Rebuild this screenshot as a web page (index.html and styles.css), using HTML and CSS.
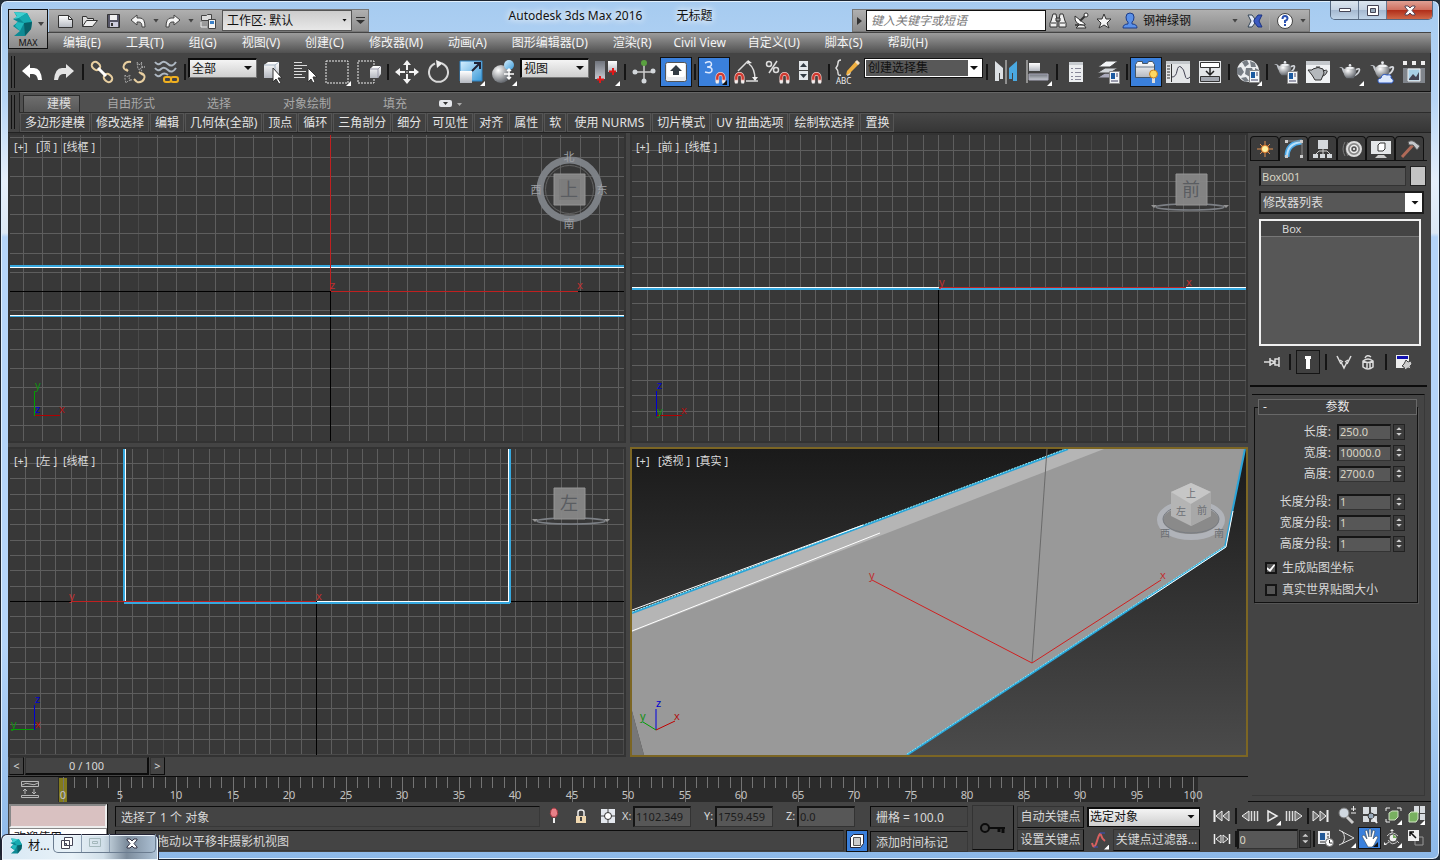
FILE: index.html
```html
<!DOCTYPE html>
<html lang="zh-CN">
<head>
    <meta charset="UTF-8">
    <meta name="viewport" content="width=device-width, initial-scale=1.0">
    <title>Autodesk 3ds Max 2016</title>
    <link rel="stylesheet" href="styles.css">
</head>
<body>

<!-- Shared shapes -->
<svg class="defs" width="0" height="0" aria-hidden="true">
    <defs>
        <linearGradient id="gWhite" x1="0" y1="0" x2="0" y2="1"><stop offset="0" stop-color="#fff"/><stop offset="1" stop-color="#b4b8c0"/></linearGradient>
        <linearGradient id="gGrey" x1="0" y1="0" x2="0" y2="1"><stop offset="0" stop-color="#70747c"/><stop offset="1" stop-color="#c4c8d0"/></linearGradient>
        <linearGradient id="gBlue" x1="0" y1="0" x2="1" y2="1"><stop offset="0" stop-color="#d8f0ff"/><stop offset="1" stop-color="#3a9ad8"/></linearGradient>
        <linearGradient id="gSky" x1="0" y1="0" x2="0" y2="1"><stop offset="0" stop-color="#1a1a1a"/><stop offset="1" stop-color="#4b4b4b"/></linearGradient>
        <radialGradient id="gBall" cx="35%" cy="30%" r="70%"><stop offset="0" stop-color="#fff"/><stop offset="1" stop-color="#666a70"/></radialGradient>
        <symbol id="magnet" viewBox="0 0 12 13"><path d="M2.500 12V6a3.500 3.500 0 0 1 7 0v6" fill="none" stroke="#f4d0cc" stroke-width="4"/><path d="M2.500 9V6a3.500 3.500 0 0 1 7 0v3" fill="none" stroke="#d03a30" stroke-width="2.600"/><path d="M1 10h3v3H1zM8 10h3v3H8z" fill="#eee"/></symbol>
        <symbol id="badge" viewBox="0 0 11 13"><path d="M.5.500h10v12H.5z" fill="#f4f6f8" stroke="#888"/><path d="M2 2h4v6H2z" fill="#1c5aa0"/><path d="M7 3h2M7 5h2M2 10h7" stroke="#446"/></symbol>
        <symbol id="teapot" viewBox="0 0 26 20"><path d="M20 8q5-3 4 1t-6 6" fill="none" stroke="#d4d7dc" stroke-width="2"/><path d="M7 13Q4 11 3 6L0 5q5-1 6 3z" fill="#c4c8ce"/><path d="M6 7q7-4 14 0 1 7-3 11H9Q4 14 6 7z" fill="url(#gBall)"/><path d="M7 6q6-4 12 0-6 2-12 0z" fill="#f0f2f4"/><circle cx="13" cy="2.500" r="1.500" fill="#e8eaee"/></symbol>
        <symbol id="logo" viewBox="0 0 22 26"><path d="M2 1l13 1 5 9-1 7-6 7-11 0 6-5-3-2-4-3 5-4-5-3 4-2z" fill="#0d8a94"/><path d="M2 1l13 1-8 5-5 1 3-3z" fill="#3cd0d0"/><path d="M15 2l5 9-8 1-5-5z" fill="#16aab0"/><path d="M12 12l8-1-1 7-6 7z" fill="#086068"/><path d="M5 11l7 1-4 8-5-5z" fill="#22b8bc"/></symbol>
    </defs>
</svg>

<div class="window">

    <!-- Title bar and menu -->
    <header class="header">
        <button class="app-button" aria-label="应用程序菜单">
            <svg width="22" height="26"><use href="#logo"/></svg>
            <span>MAX</span>
            <i class="caret"></i>
        </button>
        <div class="titlebar">
            <div class="quick">
                <button aria-label="新建"><svg width="18" height="16" viewBox="0 0 18 16"><path d="M1.500 2.500h10l4 4v8h-14z" fill="url(#gWhite)" stroke="#333"/><path d="M11.500 2.500v4h4" fill="none" stroke="#333"/></svg></button>
                <button aria-label="打开"><svg width="18" height="16" viewBox="0 0 18 16"><path d="M1.500 13.500v-10h4l1 2h6v3" fill="#ddd" stroke="#333"/><path d="M1.500 13.500l4-6h11l-5 6z" fill="#eee" stroke="#333"/></svg></button>
                <button aria-label="保存"><svg width="16" height="16" viewBox="0 0 16 16"><path d="M1.500 1.500h12v13h-12z" fill="#556" stroke="#333"/><path d="M4 2h7v5H4z" fill="#f0f0f0"/><path d="M4 9h8v5H4z" fill="#ccd"/><path d="M5 10h2v3H5z" fill="#333"/></svg></button>
                <button aria-label="撤消"><svg width="18" height="16" viewBox="0 0 18 16"><path d="M2 7l6-5v3h3q5 0 5 9h-3q0-5-3-5H8v3z" fill="#f4f4f4" stroke="#444"/></svg></button><i class="caret"></i>
                <button aria-label="重做"><svg width="18" height="16" viewBox="0 0 18 16"><path d="M16 7l-6-5v3H7q-5 0-5 9h3q0-5 3-5h2v3z" fill="#f4f4f4" stroke="#444"/></svg></button><i class="caret"></i>
                <button aria-label="项目文件夹"><svg width="18" height="16" viewBox="0 0 18 16"><path d="M2.500 2.500h5l1-1h4v6h-10z" fill="#ddd" stroke="#444"/><path d="M2 9v5h6" fill="none" stroke="#eee"/><path d="M9.500 6.500h7v9h-7z" fill="#f4f4f4" stroke="#444"/><path d="M11 8h4v3h-4z" fill="#3a80c8"/></svg></button>
                <span class="select ws-select"><select aria-label="工作区"><option>工作区: 默认</option></select></span>
                <button class="more" aria-label="自定义"><svg width="11" height="9" viewBox="0 0 11 9"><path d="M1 1.500h9" stroke="#333"/><path d="M1 4h9L5.500 8z" fill="#333"/></svg></button>
            </div>
            <h1><span>Autodesk 3ds Max 2016</span><span>无标题</span></h1>
            <div class="infocenter">
                <button class="expand" aria-label="折叠"><svg width="6" height="10" viewBox="0 0 6 10"><path d="M0 1l5 4-5 4z" fill="#333"/></svg></button>
                <input type="search" aria-label="搜索" placeholder="键入关键字或短语">
                <button aria-label="搜索"><svg width="18" height="18" viewBox="0 0 18 18"><path d="M2 9l2-7h3l1 6v7H1v-4zM16 9l-2-7h-3l-1 6v7h7v-4z" fill="#f0f0f0" stroke="#333"/><path d="M7 6h4v3H7zM2 11h5M11 11h5" stroke="#333" fill="#999"/></svg></button>
                <button aria-label="订阅"><svg width="16" height="18" viewBox="0 0 16 18"><path d="M2 13h9l2 3H3l3-3z" fill="#eee" stroke="#333"/><path d="M2 4q-1 9 9 9 2 0 1-1z" fill="#fff" stroke="#333"/><path d="M7 9l6-6" stroke="#333" stroke-width="2"/><circle cx="13" cy="3" r="2" fill="#fff" stroke="#333"/></svg></button>
                <button aria-label="收藏"><svg width="18" height="18" viewBox="0 0 18 18"><path d="M9 2l2 5h5l-4 4 2 5-5-3-5 3 2-5-4-4h5z" fill="#f4f4f4" stroke="#333"/></svg></button>
                <button class="user"><svg width="16" height="18" viewBox="0 0 16 18"><path d="M1 16q0-4 5-4V10Q4 9 4 5q0-4 4-4t4 4q0 4-2 5v2q5 0 5 4z" fill="#5a90e8" stroke="#1c3c88"/></svg><span>钢神绿钢</span><i class="caret"></i></button>
                <button aria-label="Exchange"><svg width="16" height="16" viewBox="0 0 16 16"><path d="M1 2h4l3 4v4l-3 4H1l3-6z" fill="#e4eaf8" stroke="#345"/><path d="M15 2h-4L7 7l0 2 4 5h4l-3-6z" fill="#3a58c0" stroke="#1c3480"/></svg></button>
                <i class="rule"></i>
                <button aria-label="帮助"><svg width="18" height="18" viewBox="0 0 18 18"><circle cx="9" cy="9" r="7.500" fill="#fff" stroke="#444"/><path d="M6.500 7q0-3 2.500-3t2.500 2.500Q11.500 8 9 9v2" fill="none" stroke="#2a50b0" stroke-width="2"/><path d="M8 12h2v2H8z" fill="#2a50b0"/></svg></button><i class="caret"></i>
            </div>
            <div class="win-buttons">
                <button aria-label="最小化"><svg width="12" height="6" viewBox="0 0 12 6"><path d="M.5 1.500h11v3H.5z" fill="#fff" stroke="#445"/></svg></button>
                <button aria-label="最大化"><svg width="12" height="11" viewBox="0 0 12 11"><path d="M.5.500h11v10H.5z" fill="#fff" stroke="#445"/><path d="M3.500 3.500h5v4h-5z" fill="#9ab" stroke="#445"/></svg></button>
                <button class="close" aria-label="关闭"><svg width="12" height="11" viewBox="0 0 12 11"><path d="M1 1h3l2 2 2-2h3v1L8 5.500 11 9v1H8L6 8l-2 2H1V9l3-3.500L1 2z" fill="#fff" stroke="#545"/></svg></button>
            </div>
        </div>
        <nav class="menubar">
            <a href="#">编辑(E)</a>
            <a href="#">工具(T)</a>
            <a href="#">组(G)</a>
            <a href="#">视图(V)</a>
            <a href="#">创建(C)</a>
            <a href="#">修改器(M)</a>
            <a href="#">动画(A)</a>
            <a href="#">图形编辑器(D)</a>
            <a href="#">渲染(R)</a>
            <a href="#" class="tight">Civil View</a>
            <a href="#">自定义(U)</a>
            <a href="#">脚本(S)</a>
            <a href="#">帮助(H)</a>
        </nav>
    </header>

    <!-- Main toolbar -->
    <div class="toolbar">
        <button aria-label="撤消"><svg viewBox="0 0 26 26"><path d="M3 12l8-7v4h4q7 0 8 12h-4q-1-6-5-6h-3v4z" fill="#fff"/></svg></button>
        <button aria-label="重做"><svg viewBox="0 0 26 26"><path d="M23 12l-8-7v4h-4Q4 9 3 21h4q1-6 5-6h3v4z" fill="#e4e4e4"/></svg></button>
        <i class="sep"></i>
        <button aria-label="选择并链接"><svg viewBox="0 0 26 26"><g fill="none" stroke="#e8cfa0" stroke-width="2"><rect x="2.500" y="3.500" width="9" height="7" rx="3.500" transform="rotate(42 7 7)"/><rect x="14.500" y="15.500" width="9" height="7" rx="3.500" transform="rotate(42 19 19)"/><path d="M9 9l8 8" stroke="#fff" stroke-width="3"/></g></svg></button>
        <button aria-label="取消链接"><svg viewBox="0 0 26 26"><g fill="none" stroke="#e8cfa0" stroke-width="2"><path d="M10 3Q5 2 3 6t4 6M16 23q5 1 7-3t-3-6M5 10l2 2M18 13l4 3M13 20l3 3"/></g><path d="M16 3l2 3 3-3-1 4 4 1-5 1 2 3-4-2zM4 16l2 2 3-2-1 4 3 1-4 1-2 2-1-4z" fill="none" stroke="#a8a8a8" stroke-dasharray="2 1"/></svg></button>
        <button aria-label="绑定到空间扭曲"><svg viewBox="0 0 26 26"><g fill="none" stroke="#aeb8c2" stroke-width="2"><path d="M2 3q3 4 6 1t7 1 8-2M2 9q3 4 6 1t7 1 8-2M2 15q3 4 6 1t7 0"/></g><g fill="none" stroke="#f0b020" stroke-width="2"><rect x="11" y="18" width="7" height="5" rx="2"/><rect x="18" y="18" width="7" height="5" rx="2"/></g></svg></button>
        <i class="sep"></i>
        <span class="select filter"><select aria-label="选择过滤器"><option>全部</option></select></span>
        <button aria-label="选择对象"><svg viewBox="0 0 26 26"><path d="M4 6l4-3h11v12l-4 4H4z" fill="url(#gWhite)"/><path d="M4 6h11v13M15 6l4-3" stroke="#a4b4c4" fill="none"/><path d="M13 9v14l3-3 3 5 2-1-3-5h4z" fill="#fff" stroke="#333"/></svg></button>
        <button aria-label="按名称选择"><svg viewBox="0 0 26 26"><path d="M2 3.500h8M2 6.500h13M2 9.500h8M2 12.500h12M2 15.500h8M2 18.500h11" stroke="#ddd"/><path d="M16 9v14l3-3 2 4 2-1-2-5h4z" fill="#fff" stroke="#333"/></svg></button>
        <button class="fly" aria-label="矩形选择区域"><svg viewBox="0 0 26 26"><path d="M2 2h22v22H2z" fill="none" stroke="#eee" stroke-dasharray="2 1"/></svg></button>
        <button aria-label="窗口/交叉"><svg viewBox="0 0 26 26"><path d="M18 6V2H2v22h16v-4" fill="none" stroke="#eee" stroke-dasharray="2 1"/><path d="M14 10l3-3h8v8l-3 4h-8z" fill="url(#gWhite)"/><path d="M14 10h8v9M22 10l3-3" fill="none" stroke="#99a"/></svg></button>
        <i class="sep"></i>
        <button aria-label="选择并移动"><svg viewBox="0 0 26 26"><path d="M13 1l4 5h-3v5h-2V6H9zM13 25l4-5h-3v-5h-2v5H9zM1 13l5-4v3h5v2H6v3zM25 13l-5-4v3h-5v2h5v3z" fill="#f4f4f4"/><path d="M12 12h2v2h-2z" fill="#888"/></svg></button>
        <button aria-label="选择并旋转"><svg viewBox="0 0 26 26"><path d="M16 4.500a9.500 9.500 0 1 1-7 0" fill="none" stroke="#d8d8d8" stroke-width="2"/><path d="M10 1l7 3-6 5z" fill="#eee"/></svg></button>
        <button class="fly" aria-label="选择并缩放"><svg viewBox="0 0 26 26"><path d="M2 2h22v20H2z" fill="url(#gBlue)" stroke="#2c80c0"/><path d="M2 12h12v12H2z" fill="url(#gWhite)"/><path d="M14 12l7-7M16 4h6v6" stroke="#223" stroke-width="2" fill="none"/></svg></button>
        <button class="fly" aria-label="选择并放置"><svg viewBox="0 0 26 26"><circle cx="11" cy="15" r="9" fill="url(#gBall)"/><circle cx="19" cy="6" r="5" fill="url(#gBlue)"/><path d="M19 10v10M14 15h10M17 12l2-2 2 2M17 18l2 2 2-2" stroke="#fff" stroke-width="1.500" fill="none"/></svg></button>
        <span class="select refsys"><select aria-label="参考坐标系"><option>视图</option></select></span>
        <button class="fly" aria-label="使用轴点中心"><svg viewBox="0 0 26 26"><path d="M2 2h10v18H2z" fill="url(#gGrey)"/><path d="M15 2h9v11h-9z" fill="url(#gWhite)"/><path d="M7 17v7M4 20.500h7M20 9v7M16 12.500h7" stroke="#e01818" stroke-width="2"/></svg></button>
        <i class="sep"></i>
        <button aria-label="选择并操纵"><svg viewBox="0 0 26 26"><path d="M13 5v17M3 13h20" stroke="#ccc" stroke-width="1.500"/><circle cx="13" cy="4" r="3" fill="#5aa040"/><g fill="#d4d8dc"><circle cx="4" cy="13" r="2.500"/><circle cx="22" cy="12" r="2.500"/><circle cx="13" cy="22" r="2.500"/></g></svg></button>
        <button class="on" aria-label="键盘快捷键覆盖切换"><svg viewBox="0 0 26 26"><rect x="2.500" y="3.500" width="21" height="19" rx="2" fill="#e8eaee" stroke="#555"/><rect x="4" y="4" width="18" height="14" rx="2" fill="#fff"/><path d="M13 6l6 6h-3v4h-6v-4H7z" fill="#333c44"/></svg></button>
        <i class="sep"></i>
        <button class="on fly" aria-label="捕捉开关"><svg viewBox="0 0 26 26"><path d="M4 4q6-3 6.500 1 0 3-4.500 3 5 0 5 3 0 4-7 2" fill="none" stroke="#dce8ff" stroke-width="1.500"/><use href="#magnet" x="14" y="12" width="11" height="13"/></svg></button>
        <button aria-label="角度捕捉"><svg viewBox="0 0 26 26"><path d="M5 12L15 2M13 22h12M16 5q6 4 6 16" fill="none" stroke="#ddd" stroke-width="1.500"/><path d="M14 5l1-4 4 3zM19 18l3 4 3-4z" fill="#eee"/><use href="#magnet" x="1" y="12" width="11" height="13"/></svg></button>
        <button aria-label="百分比捕捉"><svg viewBox="0 0 26 26"><g fill="none" stroke="#ddd" stroke-width="1.500"><circle cx="4" cy="5" r="2.500"/><circle cx="11" cy="11" r="2.500"/><path d="M12 2L4 14"/></g><use href="#magnet" x="14" y="12" width="11" height="13"/></svg></button>
        <button aria-label="微调器捕捉"><svg viewBox="0 0 26 26"><path d="M2 2h9v9H2zM2 12h9v9H2z" fill="#e4e8ec"/><path d="M3 8l3.500-4L10 8zM3 15l3.500 4 3.500-4z" fill="#333c44"/><use href="#magnet" x="14" y="12" width="11" height="13"/></svg></button>
        <i class="sep"></i>
        <button aria-label="编辑命名选择集"><svg viewBox="0 0 26 26"><g fill="none" stroke="#ddd" stroke-width="1.500"><path d="M6 1Q3 1 3 4t-2 5q2 2 2 5t3 2M12 16q3 0 3-3"/></g><path d="M12 12L21 2l3 3-10 10-3 1z" fill="#f0b040"/><path d="M20 3l2-2 3 3-2 2z" fill="#f0e0c8"/><text x="1" y="25" class="abc">ABC</text></svg></button>
        <span class="select named"><select aria-label="命名选择集"><option>创建选择集</option></select></span>
        <i class="sep"></i>
        <button aria-label="镜像"><svg viewBox="0 0 26 26"><path d="M2 2l8 7v11H7v-6H6v8H2z" fill="#dce0e4"/><path d="M24 2l-8 7v11h3v-6h1v8h4z" fill="#4aa8e0"/><path d="M13 1v24" stroke="#ddd"/></svg></button>
        <button class="fly" aria-label="对齐"><svg viewBox="0 0 26 26"><path d="M2 1v23" stroke="#ddd"/><path d="M4 4h11v8H4z" fill="url(#gWhite)"/><path d="M4 15h19v6H4z" fill="url(#gGrey)" stroke="#aab"/></svg></button>
        <i class="sep"></i>
        <button aria-label="场景资源管理器"><svg viewBox="0 0 26 26"><path d="M6 3h14v20H6z" fill="#eceef0"/><path d="M6 3h14v3H6z" fill="#c8ccd0"/><path d="M12 9.500h6M12 13.500h6M12 17.500h6M12 20.500h6M8 9.500h2M8 13.500h2M8 17.500h2M8 20.500h2" stroke="#889"/></svg></button>
        <button aria-label="层资源管理器"><svg viewBox="0 0 26 26"><g stroke="#444"><path d="M2 19l8-5h13l-8 5z" fill="#aab"/><path d="M2 14l8-5h13l-8 5z" fill="#d4d8dc"/><path d="M3 8l8-6h12l-8 6z" fill="#f4f6f8"/></g><use href="#badge" x="14" y="12" width="11" height="13"/></svg></button>
        <i class="sep"></i>
        <button class="on" aria-label="切换功能区"><svg viewBox="0 0 26 26"><path d="M2.500 5.500l2-3h5v2h5l1-2h4l2 3v13h-19z" fill="url(#gWhite)" stroke="#456"/><path d="M3 8h18" stroke="#678"/><path d="M19 18h3v6h-3z" fill="#ddd"/><circle cx="20.500" cy="15" r="4" fill="#ffd860" stroke="#c88020"/></svg></button>
        <button aria-label="曲线编辑器"><svg viewBox="0 0 26 26"><path d="M1 2h24v22H1z" fill="#e4e6e8"/><path d="M1 2h24v3H1z" fill="#c4c8cc"/><path d="M6.500 5v18M2 7h3M2 10h3M2 13h3M2 16h3M2 19h3" stroke="#333"/><path d="M7 18q4 0 5-6t4-4 4 8 5 2" fill="none" stroke="#445"/></svg></button>
        <button aria-label="图解视图"><svg viewBox="0 0 26 26"><path d="M2 2h22v22H2z" fill="#e4e6e8"/><path d="M3.500 3.500h19v5h-19z" fill="#fff" stroke="#333"/><path d="M3.500 17.500h19v5h-19z" fill="#a4a8b0" stroke="#333"/><path d="M13 9v7M9 12l4 4 4-4" stroke="#222" fill="none" stroke-width="1.500"/></svg></button>
        <i class="sep"></i>
        <button class="fly" aria-label="材质编辑器"><svg viewBox="0 0 26 26"><circle cx="13" cy="12" r="11" fill="#eceef0"/><path d="M7 3l5-2 2 4-4 3zM15 2l5 2 1 4-5 0zM2 9l4-1 3 5-3 4-4-2zM11 9l6 0 2 5-4 4-5-3zM20 9l4 2-1 5-3-2zM6 19l5-1 3 4-4 1z" fill="#777d84"/><use href="#badge" x="14" y="11" width="11" height="13"/></svg></button>
        <i class="sep"></i>
        <button aria-label="渲染设置"><svg viewBox="0 0 26 26"><use href="#teapot" x="1" y="1" width="22" height="17"/><use href="#badge" x="14" y="12" width="11" height="13"/></svg></button>
        <button aria-label="渲染帧窗口"><svg viewBox="0 0 26 26"><path d="M1 2h24v22H1z" fill="#f0f2f4"/><path d="M1 2h24v4H1z" fill="#c4c8cc"/><path d="M8 10q5-3 10 0l1 4-3 7h-6l-3-5-4-5h4zM18 12q5-2 4 1t-4 4M11 8h4" fill="#b4b8bc" stroke="#333"/></svg></button>
        <button class="fly" aria-label="渲染产品"><svg viewBox="0 0 26 26"><use href="#teapot" x="2" y="4" width="22" height="17"/></svg></button>
        <button aria-label="云渲染"><svg viewBox="0 0 26 26"><use href="#teapot" x="1" y="1" width="25" height="20"/><path d="M10 24q-3-4 2-5 1-5 6-3 5-1 4 3 4 2 1 5z" fill="#dce8fc" stroke="#2c58c0"/></svg></button>
        <button aria-label="打开库"><svg viewBox="0 0 26 26"><path d="M2 2h4v4H2zM11 2h4v4h-4zM20 2h4v4h-4z" fill="#eee"/><path d="M2 9h22v15H2z" fill="#80858c"/><path d="M7 10h12v12H7z" fill="#a8d0e8" stroke="#eee"/><path d="M8 20l4-5 3 3 3-5v8H8z" fill="#445"/></svg></button>
    </div>

    <!-- Ribbon -->
    <div class="ribbon">
        <div class="ribbon-tabs">
            <button class="active">建模</button>
            <button class="wide">自由形式</button>
            <button>选择</button>
            <button class="wide">对象绘制</button>
            <button>填充</button>
            <button class="ribbon-toggle" aria-label="最小化功能区"><svg width="24" height="10" viewBox="0 0 24 10"><rect x="1" y="1" width="13" height="7" rx="2" fill="#e4e6ea"/><path d="M5 3h5L7.500 6z" fill="#333"/><path d="M19 4h5l-2.500 3z" fill="#aaa"/></svg></button>
        </div>
        <div class="ribbon-panels">
            <button>多边形建模</button>
            <button>修改选择</button>
            <button>编辑</button>
            <button>几何体(全部)</button>
            <button>顶点</button>
            <button>循环</button>
            <button>三角剖分</button>
            <button>细分</button>
            <button>可见性</button>
            <button>对齐</button>
            <button>属性</button>
            <button>软</button>
            <button class="roomy">使用 NURMS</button>
            <button>切片模式</button>
            <button>UV 扭曲选项</button>
            <button>绘制软选择</button>
            <button>置换</button>
        </div>
    </div>

    <main class="workspace">
        <div class="stage">
            <div class="viewports">

                <!-- Top -->
                <section class="viewport">
                    <svg viewBox="0 0 614 306" preserveAspectRatio="xMidYMid slice">
                        <g class="grid" data-x="320" data-y="156" data-step="19.2"></g>
                        <g class="crisp">
                            <rect class="axis" y="156" width="614" height="1"/><rect class="axis" x="320" y="156" width="1" height="150"/>
                            <rect class="edge" y="130" width="614" height="2"/><rect class="edge-hi" y="132" width="614" height="1"/>
                            <rect class="edge-hi" y="180" width="614" height="1"/><rect class="edge" y="181" width="614" height="1"/>
                            <rect class="pivot" x="320" width="1" height="156"/><rect class="pivot" x="321" y="156" width="247" height="1"/>
                        </g>
                        <text class="pivot-label" x="320" y="154">z</text>
                        <text class="pivot-label" x="567" y="154">x</text>
                        <text class="vp-label" x="4" y="16">[+]</text><text class="vp-label" x="26" y="16">[顶 ]</text><text class="vp-label" x="53" y="16">[线框 ]</text>
                        <g class="crisp"><rect x="24" y="256" width="1" height="25" fill="#00a000"/><rect x="25" y="280" width="25" height="1" fill="#b00000"/></g>
                        <text class="tri-y" x="25" y="254">y</text><text class="tri-z" x="25" y="278">z</text><text class="tri-x" x="49" y="278">x</text>
                        <g class="cube">
                            <circle cx="559.500" cy="54.500" r="29.500" fill="none" stroke="#80848a" stroke-width="7"/>
                            <circle cx="559.500" cy="54.500" r="24" fill="none" stroke="#666" stroke-width="1"/>
                            <path d="M544 39h31v31h-31z" fill="#888" stroke="#999"/>
                            <path d="M549 44h21v21h-21z" fill="#808080"/>
                            <text x="559" y="61" class="cube-face">上</text>
                            <text x="559" y="26" class="compass">北</text><text x="559" y="93" class="compass">南</text><text x="526" y="59" class="compass">西</text><text x="592" y="59" class="compass">东</text>
                        </g>
                    </svg>
                </section>

                <!-- Front -->
                <section class="viewport">
                    <svg viewBox="0 0 614 306" preserveAspectRatio="xMidYMid slice">
                        <g class="grid" data-x="306" data-y="153" data-step="15.33"></g>
                        <g class="crisp">
                            <rect class="axis" x="306" y="153" width="1" height="153"/>
                            <rect class="edge-hi" y="152" width="614" height="1"/><rect class="edge" y="153" width="614" height="2"/>
                            <rect class="pivot" x="307" y="152" width="247" height="1"/>
                        </g>
                        <text class="pivot-label" x="307" y="151">y</text>
                        <text class="pivot-label" x="554" y="151">x</text>
                        <text class="vp-label" x="4" y="16">[+]</text><text class="vp-label" x="26" y="16">[前 ]</text><text class="vp-label" x="53" y="16">[线框 ]</text>
                        <g class="crisp"><rect x="25" y="280" width="25" height="1" fill="#b00000"/><rect x="24" y="256" width="1" height="25" fill="#0000d0"/></g>
                        <text class="tri-z" x="25" y="254">z</text><text class="tri-y" x="25" y="280">y</text><text class="tri-x" x="49" y="279">x</text>
                        <g class="cube">
                            <ellipse cx="558" cy="72" rx="34" ry="3" fill="none" stroke="#80848a" stroke-width="1.500"/>
                            <path d="M519 70h6l-3 3zM591 70h6l-3 3z" fill="#999"/>
                            <path d="M544 39h31v31h-31z" fill="#888" stroke="#999"/>
                            <text x="559" y="61" class="cube-face">前</text>
                        </g>
                    </svg>
                </section>

                <!-- Left -->
                <section class="viewport">
                    <svg viewBox="0 0 614 306" preserveAspectRatio="xMidYMid slice">
                        <g class="grid" data-x="306" data-y="152" data-step="15.33"></g>
                        <g class="crisp">
                            <rect class="axis" y="152" width="614" height="1"/><rect class="axis" x="306" y="152" width="1" height="154"/>
                            <rect class="edge" x="113" width="2" height="153"/><rect class="edge-hi" x="115" width="1" height="153"/>
                            <rect class="edge" x="114" y="153" width="386" height="2"/>
                            <rect class="edge-hi" x="307" y="152" width="192" height="1"/>
                            <rect class="edge-hi" x="498" width="1" height="153"/><rect class="edge" x="499" width="2" height="154"/>
                            <rect class="pivot" x="61" y="152" width="245" height="1"/>
                        </g>
                        <text class="pivot-label" x="59" y="151">y</text>
                        <text class="pivot-label" x="306" y="151">x</text>
                        <text class="vp-label" x="4" y="16">[+]</text><text class="vp-label" x="26" y="16">[左 ]</text><text class="vp-label" x="53" y="16">[线框 ]</text>
                        <g class="crisp"><rect x="1" y="280" width="23" height="1" fill="#00a000"/><rect x="24" y="256" width="1" height="25" fill="#0000d0"/></g>
                        <text class="tri-z" x="25" y="254">z</text><text class="tri-x" x="25" y="279">x</text><text class="tri-y" x="1" y="279">y</text>
                        <g class="cube">
                            <ellipse cx="561" cy="72" rx="34" ry="3" fill="none" stroke="#80848a" stroke-width="1.500"/>
                            <path d="M522 70h6l-3 3zM594 70h6l-3 3z" fill="#999"/>
                            <path d="M544 39h31v31h-31z" fill="#888" stroke="#999"/>
                            <text x="559" y="61" class="cube-face">左</text>
                        </g>
                    </svg>
                </section>

                <!-- Perspective -->
                <section class="viewport active">
                    <svg viewBox="0 0 614 306" preserveAspectRatio="xMidYMid slice">
                        <path d="M0 0h614v306H0z" fill="url(#gSky)"/>
                        <path d="M0 164L436 0h40L0 184z" fill="#b5b5b5"/>
                        <path d="M0 183L472 0h141l-20 98-318 208H12L0 262z" fill="#999"/>
                        <path d="M0 262l12 44H0z" fill="#777"/>
                        <path d="M0 164L436 0M613 0l-20 98-318 208" fill="none" stroke="#2aa4d8" stroke-width="2"/>
                        <path d="M0 163L436 -1" fill="none" stroke="#9af4ff" stroke-dasharray="2 1"/>
                        <path d="M593 97L275 305" fill="none" stroke="#7aeaff" stroke-dasharray="2 1"/>
                        <path d="M0 161L231 76M0 182L248 84M601 62l-7 36-79 52" fill="none" stroke="#fff"/>
                        <path d="M415 0l-15 214" fill="none" stroke="#6a6a6a"/>
                        <path d="M240 131l160 83 129-83" fill="none" stroke="#d02020"/>
                        <text class="pivot-label" x="237" y="130">y</text><text class="pivot-label" x="528" y="130">x</text>
                        <text class="vp-label" x="4" y="16">[+]</text><text class="vp-label" x="26" y="16">[透视 ]</text><text class="vp-label" x="64" y="16">[真实 ]</text>
                        <path d="M24 281v-21" stroke="#0000e0"/><path d="M24 281l19-9" stroke="#c00000"/><path d="M24 281l-13-8" stroke="#00a000"/>
                        <text class="tri-z" x="24" y="258">z</text><text class="tri-x" x="42" y="271">x</text><text class="tri-y" x="8" y="271">y</text>
                        <g>
                            <ellipse cx="559" cy="71" rx="31" ry="17" fill="#8a8a8a" stroke="#b0b3b9" stroke-width="6"/>
                            <ellipse cx="559" cy="70" rx="28" ry="14" fill="none" stroke="#787c82"/>
                            <path d="M539 43l20-9 20 9v24l-20 10-20-10z" fill="#b4b4b4"/>
                            <path d="M539 43l20-9 20 9-20 12z" fill="#c6c6c6"/>
                            <path d="M559 55l20-12v24l-20 10z" fill="#a8a8a8"/>
                            <text x="549" y="66" class="cube-small">左</text><text x="570" y="65" class="cube-small">前</text><text x="559" y="48" class="cube-small">上</text>
                            <text x="533" y="88" class="cube-small">西</text><text x="587" y="88" class="cube-small">南</text>
                        </g>
                    </svg>
                </section>
            </div>

            <div class="time-slider">
                <button aria-label="上一帧">&lt;</button>
                <button class="thumb">0 / 100</button>
                <button aria-label="下一帧">&gt;</button>
            </div>

            <div class="trackbar">
                <button aria-label="打开迷你曲线编辑器"><svg width="18" height="17" viewBox="0 0 18 17"><path d="M.5.500h17v5H.5zM1 4q4-3 8-1t8-1M.5 14.500h17v2H.5zM4 13V8M2 10l2-2 2 2M13 8v5M11 11l2 2 2-2" fill="none" stroke="#b8b8b8"/></svg></button>
                <svg class="ticks" viewBox="0 0 1140 25" preserveAspectRatio="xMinYMin slice">
                    <g id="ticks"></g>
                </svg>
            </div>
        </div>

        <!-- Command panel -->
        <aside class="panel">
            <div class="panel-tabs">
                <button aria-label="创建"><svg viewBox="0 0 22 20"><circle cx="11" cy="10" r="4" fill="#e07820"/><path d="M11 2v16M3 10h16M6 5l10 10M16 5L6 15" stroke="#e09050"/><circle cx="11" cy="10" r="3" fill="#fff0a0"/></svg></button>
                <button class="active" aria-label="修改"><svg viewBox="0 0 22 20"><path d="M4 18Q4 4 19 3" fill="none" stroke="#4aa8e8" stroke-width="5"/><path d="M4 18Q4 4 19 3" fill="none" stroke="#b8e0fa" stroke-width="2"/><path d="M3 2h16v16" fill="none" stroke="#888"/><path d="M2 1h3v3H2zM17 1h3v3h-3zM17 16h3v3h-3zM2 16h3v3H2z" fill="#ccc"/></svg></button>
                <button aria-label="层次"><svg viewBox="0 0 22 20"><path d="M6 1h10v9H6zM1 15h5v4H1zM8 15h5v4H8zM15 15h5v4h-5z" fill="#d4d8dc"/><path d="M11 10v5M4 15l3-3h8l3 3" fill="none" stroke="#ccc"/></svg></button>
                <button aria-label="运动"><svg viewBox="0 0 22 20"><path d="M4 3q-4 7 0 14M7 3q-4 7 0 14" fill="none" stroke="#777"/><circle cx="13" cy="10" r="7" fill="#888" stroke="#ddd" stroke-width="2"/><circle cx="13" cy="10" r="3.500" fill="#555" stroke="#eee" stroke-width="1.500"/><circle cx="13" cy="10" r="1" fill="#fff"/></svg></button>
                <button aria-label="显示"><svg viewBox="0 0 22 20"><path d="M1 2h20v13H1z" fill="#e4e6e8"/><path d="M8 16h6l3 3H5z" fill="#ccc"/><path d="M8 6l2-2h5v6l-2 2H8z" fill="#fff" stroke="#333"/></svg></button>
                <button aria-label="实用程序"><svg viewBox="0 0 22 20"><path d="M3 18L14 6" stroke="#b06a58" stroke-width="3"/><path d="M9 3q4-3 8 1l4 3-3 4-4-5-4 0z" fill="#c4c8cc" stroke="#555"/></svg></button>
            </div>
            <div class="name-row">
                <input type="text" aria-label="对象名称" value="Box001">
                <button class="swatch" aria-label="对象颜色"></button>
            </div>
            <span class="select modlist"><select aria-label="修改器列表"><option>修改器列表</option></select></span>
            <ul class="stack"><li>Box</li></ul>
            <div class="stack-tools">
                <button aria-label="锁定堆栈"><svg viewBox="0 0 20 20"><path d="M2 10h6M8 6v8M8 8l5 2-5 3M13 7h4v6h-4zM17 5v10" stroke="#ddd" stroke-width="1.500" fill="none"/></svg></button>
                <i class="sep"></i>
                <button class="pressed" aria-label="显示最终结果"><svg viewBox="0 0 20 20"><path d="M7 4h6v3h-1v10H8V7H7z" fill="#fff"/></svg></button>
                <i class="sep"></i>
                <button aria-label="使唯一"><svg viewBox="0 0 20 20"><path d="M3 4l4 8M17 4l-4 8M7 10l3 6 3-6M6 8l3 2M14 8l-3 2M10 14v3" stroke="#ddd" fill="none" stroke-width="1.500"/></svg></button>
                <button aria-label="移除修改器"><svg viewBox="0 0 20 20"><path d="M5 9q5-4 10 0v6q-5 4-10 0zM5 9q5 3 10 0M9 10v6M12 10v6M7 6q2-4 6-1" stroke="#ddd" fill="none" stroke-width="1.500"/></svg></button>
                <i class="sep"></i>
                <button aria-label="配置修改器集"><svg viewBox="0 0 20 20"><path d="M2 3h13v13H2z" fill="#eee"/><path d="M3 4h11v3H3z" fill="#1010b0"/><path d="M12 8l2 2 3-1 1 3-2 2 1 3-3-1-3 2-1-3-2-1 2-2z" fill="#ccc" stroke="#444"/></svg></button>
            </div>
            <div class="scroll">
                <fieldset class="rollout">
                    <legend><button><span>-</span>参数</button></legend>
                    <div class="param"><label for="len">长度:</label><input id="len" type="text" value="250.0"><i class="spin"></i></div>
                    <div class="param"><label for="wid">宽度:</label><input id="wid" type="text" value="10000.0"><i class="spin"></i></div>
                    <div class="param"><label for="hei">高度:</label><input id="hei" type="text" value="2700.0"><i class="spin"></i></div>
                    <div class="param group"><label for="lseg">长度分段:</label><input id="lseg" type="text" value="1"><i class="spin"></i></div>
                    <div class="param"><label for="wseg">宽度分段:</label><input id="wseg" type="text" value="1"><i class="spin"></i></div>
                    <div class="param"><label for="hseg">高度分段:</label><input id="hseg" type="text" value="1"><i class="spin"></i></div>
                    <label class="check"><input type="checkbox" checked>生成贴图坐标</label>
                    <label class="check"><input type="checkbox">真实世界贴图大小</label>
                </fieldset>
            </div>
        </aside>
    </main>

    <!-- Status bar -->
    <footer class="status">
        <div class="listener">
            <div class="macro"></div>
            <div class="script">欢迎使用</div>
        </div>
        <div class="info">
            <div class="line">
                <output class="sunken grow">选择了 1 个 对象</output>
                <div class="info-icons">
                    <button aria-label="自适应降级"><svg viewBox="0 0 16 18"><path d="M5 3q3-4 6 0 2 4-1 7H6Q3 7 5 3z" fill="#e88088" stroke="#a03840"/><path d="M7 11h2v5H7z" fill="#eee"/></svg></button>
                    <button aria-label="选择锁定"><svg viewBox="0 0 16 18"><path d="M5 9V5q0-2 3-2t3 2v4" fill="none" stroke="#eee" stroke-width="1.500"/><path d="M3 9h10v7H3z" fill="#f0d8b0"/><path d="M8 10v4" stroke="#444" stroke-width="2"/></svg></button>
                    <button aria-label="绝对模式"><svg viewBox="0 0 16 18"><path d="M1 2h14v14H1z" fill="#e4e8ee"/><path d="M8 2v14M1 9h14" stroke="#444"/><circle cx="8" cy="9" r="3.500" fill="#fff" stroke="#333"/></svg></button>
                </div>
                <div class="coords">
                    <label>X:<input type="text" value="1102.349"></label>
                    <label>Y:<input type="text" value="1759.459"></label>
                    <label>Z:<input type="text" value="0.0"></label>
                </div>
            </div>
            <div class="line">
                <output class="sunken grow prompt">单击并拖动以平移非摄影机视图</output>
                <button class="iso on" aria-label="孤立当前选择"><svg viewBox="0 0 18 18"><path d="M2.500 5.500l3-3h10v9l-3 4h-10z" fill="#fff" stroke="#223"/><path d="M5.500 5.500h7v8h-7z" fill="#ccc" stroke="#555"/></svg></button>
            </div>
        </div>
        <div class="units">
            <output class="sunken">栅格 = 100.0</output>
            <output class="sunken">添加时间标记</output>
        </div>
        <button class="raised key" aria-label="设置关键点"><svg width="26" height="14" viewBox="0 0 26 14"><circle cx="5" cy="7" r="4" fill="none" stroke="#0c0c0c" stroke-width="2"/><path d="M9 7h16" stroke="#0c0c0c" stroke-width="2"/><path d="M19 7v4M23 7v5" stroke="#0c0c0c" stroke-width="3"/></svg></button>
        <div class="keys">
            <div class="line">
                <button class="raised mode">自动关键点</button>
                <span class="select keyset"><select aria-label="关键点集"><option>选定对象</option></select></span>
            </div>
            <div class="line">
                <button class="raised mode">设置关键点</button>
                <button class="tangent fly" aria-label="默认切线"><svg viewBox="0 0 18 18"><path d="M2 12q2 8 5-2T11 4t4 6" fill="none" stroke="#d86060" stroke-width="2"/><path d="M4 16h4M10 2h5" stroke="#3850c0"/></svg></button>
                <button class="raised filters">关键点过滤器...</button>
            </div>
        </div>
        <div class="playback">
            <div class="line">
                <button aria-label="转至开头"><svg viewBox="0 0 18 14"><path d="M1.500 1v12" stroke="#eee" stroke-width="2"/><path d="M9 2v10L3 7zM16 2v10l-6-5z" fill="#777" stroke="#eee"/></svg></button>
                <i class="sep"></i>
                <button aria-label="上一帧"><svg viewBox="0 0 18 14"><path d="M8 2v10L1 7z" fill="#777" stroke="#eee"/><path d="M10.500 2v10M13.500 2v10M16.500 2v10" stroke="#ddd" stroke-width="1.500"/></svg></button>
                <button class="fly" aria-label="播放"><svg viewBox="0 0 18 14"><path d="M5 2v10l9-5z" fill="#555" stroke="#eee" stroke-width="1.500"/></svg></button>
                <button aria-label="下一帧"><svg viewBox="0 0 18 14"><path d="M10 2v10l7-5z" fill="#777" stroke="#eee"/><path d="M1.500 2v10M4.500 2v10M7.500 2v10" stroke="#ddd" stroke-width="1.500"/></svg></button>
                <i class="sep"></i>
                <button class="last" aria-label="转至结尾"><svg viewBox="0 0 18 14"><path d="M16.500 1v12" stroke="#eee" stroke-width="2"/><path d="M2 2v10l6-5zM9 2v10l6-5z" fill="#777" stroke="#eee"/></svg></button>
            </div>
            <div class="line">
                <button aria-label="关键点模式"><svg viewBox="0 0 18 14"><path d="M1.500 2v10M16.500 2v10" stroke="#eee" stroke-width="1.500"/><path d="M8 3v8L3 7zM10 3v8l5-4z" fill="#555" stroke="#eee"/></svg></button>
                <i class="sep"></i>
                <input type="text" aria-label="当前帧" value="0"><i class="spin"></i>
                <i class="sep"></i>
                <button class="time-config" aria-label="时间配置"><svg viewBox="0 0 18 18"><path d="M1 1h12v13H1z" fill="#e8eaee"/><path d="M3 3h5v7H3z" fill="#205898"/><path d="M10 4h2M10 7h2M3 12h5" stroke="#333"/><circle cx="12.500" cy="12.500" r="4" fill="#fff" stroke="#666"/><path d="M12.500 10v3h3" stroke="#333" fill="none"/></svg></button>
            </div>
        </div>
        <div class="nav-tools">
            <button aria-label="缩放"><svg viewBox="0 0 20 20"><circle cx="7" cy="8" r="5" fill="#d0d8e0" stroke="#777"/><path d="M10 12l6 6" stroke="#ccc" stroke-width="3"/><path d="M14 4h5M16.500 1v5M14 8h5" stroke="#eee"/></svg></button>
            <button aria-label="缩放所有视图"><svg viewBox="0 0 20 20"><path d="M3 2h6v7H3zM11 2h6v7h-6zM3 11h6v6H3zM11 11h6v6h-6z" fill="#d8dce0"/><circle cx="11" cy="11" r="3" fill="#9ab" stroke="#333"/><path d="M13 13l4 5" stroke="#eee" stroke-width="2"/></svg></button>
            <button class="fly" aria-label="最大化显示"><svg viewBox="0 0 20 20"><path d="M3 6V3h4M14 3h4v3M3 14v3h4" fill="none" stroke="#eee"/><path d="M6 8l3-2h6v6l-3 3H6z" fill="#78b060" stroke="#cfe0c4"/></svg></button>
            <button class="fly" aria-label="所有视图最大化"><svg viewBox="0 0 20 20"><path d="M8 1h5v7H8zM14 1h5v7h-5zM14 9h5v6h-5z" fill="#d8dce0"/><path d="M3 9l2-2h7v7l-2 3H3z" fill="#78b060" stroke="#d4e8c8"/></svg></button>
            <button class="fly" aria-label="视野"><svg viewBox="0 0 20 20"><path d="M2 2l15 8-15 7M5 3q5 7 0 13" fill="none" stroke="#ddd"/></svg></button>
            <button class="fly on" aria-label="平移视图"><svg viewBox="0 0 20 20"><path d="M3 10l-1-2 2-1 3 4-2-8 2-1 2 7V1h2v8l2-7 2 1-2 8 3-3 2 1-4 8-2 2H8z" fill="#fff" stroke="#345" stroke-width=".6"/></svg></button>
            <button class="fly" aria-label="环绕"><svg viewBox="0 0 20 20"><path d="M9 2v3M3 16l3-2M16 15l-2-2M4 8q5-6 11 0M5 12q4 7 10 1" fill="none" stroke="#ccc"/><circle cx="10" cy="10" r="4" fill="#eee" stroke="#555"/><path d="M10 10V6l4 4z" fill="#78b060"/><path d="M7 3l2-2 2 2zM1 14v3h3z" fill="#eee"/></svg></button>
            <button aria-label="最大化视口切换"><svg viewBox="0 0 20 20"><path d="M9 9h8v8H9z" fill="none" stroke="#999"/><path d="M2 2h11v11H2z" fill="#f0f0f0"/><path d="M4 4l6 6M4 8V4h4" stroke="#111" fill="none" stroke-width="1.500"/></svg></button>
        </div>
    </footer>
</div>

<!-- Minimized material editor -->
<div class="mini-window">
    <svg width="15" height="16"><use href="#logo"/></svg>
    <span>材...</span>
    <div class="mini-buttons">
        <button aria-label="还原"><svg width="12" height="12" viewBox="0 0 12 12"><path d="M3.500.500h8v8h-8zM.5 3.500h8v8h-8z" fill="#fff" stroke="#445"/><path d="M3.500 6.500h2v2h-2z" fill="#9ab" stroke="#445"/></svg></button>
        <button aria-label="最大化" disabled><svg width="12" height="10" viewBox="0 0 12 10"><path d="M.5.500h11v8H.5zM3.500 3.500h5v2h-5z" fill="none" stroke="#a4b8bc"/></svg></button>
        <button class="close" aria-label="关闭"><svg width="12" height="11" viewBox="0 0 12 11"><path d="M1 1h3l2 2 2-2h3v1L8 5.500 11 9v1H8L6 8l-2 2H1V9l3-3.500L1 2z" fill="#fff" stroke="#334"/></svg></button>
    </div>
</div>

<script>
    // viewport grids: every tenth line is drawn fainter
    document.querySelectorAll(".grid").forEach(g => {
        const step = Number(g.dataset.step);
        let html = "";
        function addLines(origin, max, vertical) {
            const first = -Math.floor(origin / step);
            for (let i = first; origin + i * step < max; i++) {
                const p = Math.round(origin + i * step);
                const cls = i !== 0 && i % 10 === 0 ? "faint" : "";
                html += vertical
                    ? `<rect class="${cls}" x="${p}" width="1" height="306"/>`
                    : `<rect class="${cls}" y="${p}" width="614" height="1"/>`;
            }
        }
        addLines(Number(g.dataset.x), 614, true);
        addLines(Number(g.dataset.y), 306, false);
        g.innerHTML = html;
    });

    // track bar
    let ticks = '<rect class="current" x="1" y="1" width="8" height="24"/>';
    for (let f = 0; f <= 100; f++) {
        const x = Math.round(5 + f * 11.3);
        ticks += `<rect class="tick" x="${x}" width="1" height="${f % 5 === 0 ? 25 : 11}"/>`;
        if (f % 5 === 0) {
            ticks += `<text x="${x}" y="22">${f}</text>`;
        }
    }
    document.getElementById("ticks").innerHTML = ticks;
</script>

</body>
</html>
```
FILE: styles.css
```css
* {
    box-sizing: border-box;
    margin: 0;
    padding: 0;
}
body {
    background: #26323c;
    color: #d8d8d8;
    font: 12px/16px "Noto Sans", "Noto Sans CJK SC", sans-serif;
    overflow: hidden;
}
button, input, select {
    font: inherit;
    color: inherit;
    background: none;
    border: none;
    border-radius: 0;
    outline: none;
    min-width: 0;
}
button {
    display: flex;
    align-items: center;
    justify-content: center;
    white-space: nowrap;
}
svg {
    display: block;
    flex: none;
}
.defs {
    position: absolute;
}
a {
    color: inherit;
    text-decoration: none;
}
.window {
    min-height: 100vh;
    display: flex;
    flex-direction: column;
    padding: 8px 8px 7px 7px;
    border: 1px solid #1c2430;
    border-radius: 7px;
    background: linear-gradient(#a6cbf0 0, #b8d6f6 100px, #e6effa 180px, #dce8f4 232px, #b4d4f8 236px, #b4d4f8 75%, #8cb8e8 100%);
    box-shadow: inset 0 0 0 1px #e0effc;
}

/* Header */
.header {
    display: grid;
    grid-template-columns: 41px 1fr;
    grid-template-rows: 23px 21px;
}
.app-button {
    grid-area: 1 / 1 / 3 / 2;
    display: grid;
    grid-template-columns: 26px 10px;
    grid-template-rows: 28px 10px;
    justify-items: center;
    align-items: center;
    width: 40px;
    height: 40px;
    border: 1px solid #111;
    background: linear-gradient(#c8c8c8, #8a8a8a);
    color: #111;
    z-index: 1;
}
.app-button svg {
    grid-area: 1 / 1;
}
.app-button span {
    grid-area: 2 / 1 / 3 / 3;
    font: 9px/10px "Noto Sans", sans-serif;
}
.caret {
    flex: none;
    width: 6px;
    height: 4px;
    background: #444;
    clip-path: polygon(0 0, 100% 0, 50% 100%);
}
.titlebar {
    grid-area: 1 / 2;
    display: flex;
    color: #111;
}
.quick {
    display: flex;
    align-items: center;
    width: 320px;
    background: linear-gradient(#b0b0b0, #8c8c8c);
    border: 1px solid #777;
    border-left: none;
    padding-left: 7px;
    gap: 4px;
}
.quick button {
    flex: 0 0 20px;
}
.quick .caret {
    margin-left: 1px;
}
.quick .more {
    flex: 1;
    margin-left: -4px;
}
.titlebar h1 {
    flex: 1;
    display: flex;
    justify-content: center;
    gap: 34px;
    font-size: 12px;
    font-weight: normal;
    line-height: 14px;
    white-space: nowrap;
    text-shadow: 0 0 6px #fff, 0 0 8px #fff;
}
.infocenter {
    display: flex;
    align-items: center;
    width: 458px;
    margin-right: 20px;
    gap: 6px;
    background: linear-gradient(#b0b0b0, #8c8c8c);
    border: 1px solid #777;
}
.infocenter .expand {
    width: 13px;
    margin-right: -6px;
}
.infocenter input {
    width: 180px;
    height: 21px;
    margin-right: -3px;
    background: #fff;
    border: 1px solid #111;
    padding: 0 4px;
    font-style: italic;
}
.infocenter input::placeholder {
    color: #777;
}
.infocenter .user {
    flex: 1;
    gap: 5px;
    margin-left: 3px;
}
.infocenter .user .caret {
    margin-left: auto;
}
.infocenter .caret {
    margin-right: 3px;
}
.rule {
    width: 1px;
    height: 18px;
    background: #aaa;
}
.win-buttons {
    display: flex;
    flex: none;
    width: 103px;
    height: 19px;
    margin: -8px -2px 0 0;
    border: 1px solid #556880;
    border-top: none;
    border-radius: 0 0 5px 5px;
    overflow: hidden;
}
.win-buttons button {
    flex: 28;
    background: linear-gradient(#dce6f0 0, #c4d2e2 50%, #a4b8d0 50%, #c0d4e8);
    border-right: 1px solid #667890;
}
.win-buttons .close {
    flex: 46;
    background: linear-gradient(#e0a094 0, #d07060 48%, #b02c18 50%, #d06848);
    border: none;
}
.menubar {
    grid-area: 2 / 1 / 3 / 3;
    display: flex;
    align-items: center;
    gap: 25px;
    padding-left: 55px;
    background: linear-gradient(#9c9c9c, #505050);
    border-top: 1px solid #444;
    color: #f4f4f4;
    white-space: nowrap;
}
.menubar .tight {
    margin: 0 -3px;
}

/* Drop-downs */
.select {
    position: relative;
    display: flex;
    flex: none;
}
.select select {
    width: 100%;
    appearance: none;
    line-height: 14px;
    padding: 0 2px;
    color: #111;
    background: linear-gradient(#f4f4f4, #cfcfcf);
}
.select::after {
    content: "";
    position: absolute;
    right: 5px;
    top: 50%;
    width: 8px;
    height: 4px;
    margin-top: -2px;
    background: #111;
    clip-path: polygon(0 0, 100% 0, 50% 100%);
    pointer-events: none;
}
.ws-select {
    width: 130px;
    height: 21px;
}
.ws-select select {
    border: 1px solid #555;
    padding-left: 4px;
    background: linear-gradient(#ccc, #e8e8e8);
}
.ws-select::after {
    width: 5px;
    height: 3px;
}
.filter, .refsys {
    width: 69px;
    height: 20px;
    margin-bottom: 8px;
}
.refsys {
    margin-left: 1px;
    margin-right: 1px;
}
.named {
    width: 119px;
    height: 20px;
    margin-bottom: 8px;
    margin-right: 1px;
}
.toolbar .select select {
    border: 2px solid #0c0c0c;
    border-right: 1px solid #777;
    border-bottom: 1px solid #777;
}
.toolbar .named select {
    background: linear-gradient(90deg, #585858 102px, #fff 102px);
    border: 2px solid #fff;
    outline: 1px solid #111;
    outline-offset: -1px;
}

/* Main toolbar */
.toolbar {
    display: flex;
    align-items: center;
    height: 39px;
    padding-left: 8px;
    background: repeating-linear-gradient(90deg, #111 0 1px, #444 1px 3px) 3px 3px / 4px 32px no-repeat, #444;
    border-bottom: 1px solid #111;
    border-right: 1px solid #222;
}
.toolbar button {
    position: relative;
    flex: none;
    width: 32px;
    height: 30px;
}
.toolbar button svg {
    width: 26px;
    height: 26px;
}
.toolbar button.on {
    background: #3a80dc;
    border: 1px solid #111;
    background-clip: content-box;
}
.sep {
    flex: none;
    width: 6px;
    height: 16px;
    background: linear-gradient(90deg, transparent 2px, #151515 2px, #151515 4px, transparent 4px);
}
.fly {
    position: relative;
}
.fly::after {
    content: "";
    position: absolute;
    right: 2px;
    bottom: 1px;
    width: 5px;
    height: 5px;
    background: #fff;
    clip-path: polygon(100% 0, 100% 100%, 0 100%);
}
.fly.on::after {
    background: #111;
}
.abc {
    font: 8px "Noto Sans", sans-serif;
    fill: #eee;
}

/* Ribbon */
.ribbon {
    padding-left: 11px;
    background: repeating-linear-gradient(90deg, #111 0 1px, #444 1px 3px) 3px 3px / 4px 34px no-repeat, #444;
    border-bottom: 1px solid #222;
}
.ribbon-tabs {
    display: flex;
    height: 20px;
    padding-left: 3px;
    padding-top: 2px;
    background: #505050;
    border-top: 1px solid #666;
    border-left: 1px solid #222;
    color: #a8a8a8;
}
.ribbon-tabs button {
    width: 76px;
    justify-content: flex-start;
    padding-left: 8px;
}
.ribbon-tabs .wide {
    width: 100px;
}
.ribbon-tabs .active {
    width: 57px;
    justify-content: flex-end;
    padding-right: 8px;
    margin-right: 19px;
    background: linear-gradient(#6e6e6e, #585858);
    border: 1px solid #2c2c2c;
    border-bottom: none;
    color: #ddd;
}
.ribbon-tabs .ribbon-toggle {
    width: 24px;
    margin-left: -13px;
    padding-left: 0;
}
.ribbon-panels {
    display: flex;
    gap: 1px;
    height: 20px;
    padding-left: 1px;
    background: linear-gradient(#474747, #363636);
    border-top: 1px solid #2c2c2c;
    color: #e4e4e4;
}
.ribbon-panels button {
    height: 19px;
    padding: 1px 4px 0;
    border: 1px solid #555;
    background: #404040;
}
.ribbon-panels .roomy {
    padding: 1px 6px 0;
}

/* Workspace */
.workspace {
    flex: 1;
    display: grid;
    grid-template-columns: 1fr 183px;
    background: #444;
}
.stage {
    display: flex;
    flex-direction: column;
    min-width: 0;
}
.viewports {
    flex: 1;
    display: grid;
    grid-template-columns: 1fr 1fr;
    grid-template-rows: 1fr 1fr;
    gap: 4px;
}
.viewport {
    display: flex;
    min-height: 0;
    min-width: 0;
    border: 2px solid #333;
    background: #383838;
}
.viewport.active {
    border-color: #7c6624;
}
.viewport svg {
    flex: 1;
    min-width: 0;
    height: 100%;
}
.grid rect {
    fill: #5e5e5e;
    shape-rendering: crispEdges;
}
.grid .faint {
    fill: #4a4a4a;
}
.crisp {
    shape-rendering: crispEdges;
}
.axis {
    fill: #000;
}
.edge {
    fill: #36a9e0;
}
.edge-hi {
    fill: #fff;
}
.pivot {
    fill: #c02020;
}
.pivot-label {
    fill: #c03030;
    font-size: 11px;
}
.vp-label {
    fill: #dcdcdc;
    font-size: 11px;
    white-space: pre;
}
.tri-x, .tri-y, .tri-z {
    font-size: 11px;
}
.tri-x {
    fill: #b01010;
}
.tri-y {
    fill: #109010;
}
.tri-z {
    fill: #0000d0;
}
.cube {
    opacity: 0.95;
}
.cube text, .compass, .cube-small {
    text-anchor: middle;
}
.cube-face {
    font-size: 18px;
    fill: #5c5f64;
}
.cube-small {
    font-size: 10px;
    fill: #6c6f74;
}
.compass {
    font-size: 11px;
    fill: #a4a6aa;
}

/* Time slider and track bar */
.time-slider {
    display: flex;
    gap: 1px;
    height: 19px;
    padding: 0 0 1px 1px;
    font-size: 11px;
}
.time-slider button {
    width: 15px;
    border: 1px solid #333;
    border-right-color: #0c0c0c;
    border-bottom-color: #0c0c0c;
}
.time-slider .thumb {
    width: 124px;
    border-width: 1px 2px 2px 1px;
}
.trackbar {
    display: flex;
    height: 26px;
    border-top: 1px solid #0c0c0c;
}
.trackbar button {
    width: 50px;
    padding-right: 7px;
}
.ticks {
    flex: 1;
    min-width: 0;
    height: 25px;
    margin-right: 50px;
    background: #2b2b2b;
    overflow: visible;
}
.ticks text {
    font-size: 11px;
    fill: #c4c4c4;
    text-anchor: middle;
}
.tick {
    fill: #747474;
}
.current {
    fill: #827a1c;
}

/* Command panel */
.panel {
    display: flex;
    flex-direction: column;
    padding: 3px 4px 0 2px;
    border-bottom: 1px solid #0c0c0c;
}
.panel-tabs {
    display: flex;
    height: 25px;
    border-bottom: 1px solid #111;
}
.panel-tabs button {
    width: 29px;
    height: 24px;
    border: 1px solid #111;
    border-bottom: none;
    border-radius: 4px 4px 0 0;
    background: #3c3c3c;
}
.panel-tabs .active {
    height: 25px;
    background: #444;
}
.panel-tabs svg {
    width: 22px;
    height: 20px;
}
.name-row {
    display: flex;
    gap: 4px;
    margin: 5px 1px 0 9px;
}
.name-row input, .param input, .coords input, .playback input {
    background: #575757;
    border: 2px solid #151515;
    border-right: 1px solid #333;
    border-bottom: 1px solid #333;
    color: #d8d4c4;
    font-size: 11px;
}
.name-row input {
    flex: 1;
    height: 20px;
    padding-left: 1px;
}
.name-row .swatch {
    width: 16px;
    background: #c4c4c4;
    border: 1px solid #222;
}
.modlist {
    margin: 5px 3px 0 9px;
    height: 23px;
}
.modlist select {
    border: 2px solid #1c1c1c;
    background: linear-gradient(90deg, #575757 144px, #fff 144px);
    color: #ddd;
}
.stack {
    list-style: none;
    height: 127px;
    margin: 5px 6px 0 9px;
    border: 2px solid #f0f0f0;
    background: #575757;
}
.stack li {
    height: 16px;
    padding-left: 21px;
    line-height: 15px;
    font-size: 11px;
    background: #444;
    border-bottom: 1px solid #777;
}
.stack-tools {
    display: flex;
    align-items: center;
    height: 41px;
    padding: 0 0 8px 10px;
    border-bottom: 2px solid #0c0c0c;
}
.stack-tools button {
    width: 24px;
    height: 24px;
}
.stack-tools svg {
    width: 20px;
    height: 20px;
}
.stack-tools .sep {
    margin: 0 3px;
}
.stack-tools .pressed {
    border: 1px solid #151515;
    background: #404040;
}
.scroll {
    flex: 1;
    margin: 7px 2px 5px 2px;
    padding: 4px 6px 0 2px;
    border-top: 1px solid #0c0c0c;
    border-right: 1px solid #383838;
    border-bottom: 1px solid #383838;
}
.rollout {
    height: 204px;
    min-width: 0;
    padding: 6px 3px 0 9px;
    border: 1px solid #111;
    box-shadow: 1px 1px 0 #555;
}
.rollout legend {
    width: 159px;
    margin-left: -6px;
}
.rollout legend button {
    position: relative;
    width: 100%;
    height: 16px;
    border: 1px solid #686868;
    background: #3e3e3e;
    color: #e8e8e8;
}
.rollout legend span {
    position: absolute;
    left: 4px;
}
.param {
    display: flex;
    align-items: center;
    height: 21px;
}
.param.group {
    margin-top: 7px;
}
.param label {
    flex: 1;
    text-align: right;
    margin-right: 6px;
    white-space: nowrap;
}
.param input {
    width: 54px;
    height: 16px;
    padding: 0 1px;
}
.spin {
    flex: none;
    display: flex;
    flex-direction: column;
    align-items: center;
    justify-content: space-evenly;
    width: 12px;
    height: 16px;
    background: #3c3c3c;
    border: 1px solid #222;
}
.param .spin {
    margin: 0 9px 0 2px;
}
.spin::before, .spin::after {
    content: "";
    width: 6px;
    height: 3px;
    background: #ccc;
    clip-path: polygon(50% 0, 100% 100%, 0 100%);
}
.spin::after {
    clip-path: polygon(0 0, 100% 0, 50% 100%);
}
.check {
    display: flex;
    align-items: center;
    gap: 5px;
    height: 22px;
    margin-top: 3px;
    white-space: nowrap;
}
.check + .check {
    margin-top: 0;
}
.check input {
    appearance: none;
    flex: none;
    width: 12px;
    height: 12px;
    margin-left: 1px;
    border: 2px solid #151515;
    background: #555;
}
.check input:checked::before {
    content: "";
    display: block;
    width: 8px;
    height: 8px;
    background: #fff;
    clip-path: polygon(0 40%, 35% 65%, 90% 0, 100% 20%, 40% 100%, 0 70%);
}

/* Status bar */
.status {
    display: flex;
    height: 50px;
    padding-top: 2px;
    background: #444;
    white-space: nowrap;
}
.line {
    display: flex;
    align-items: center;
    height: 23px;
}
.listener {
    width: 100px;
    margin-right: 5px;
    padding-left: 1px;
    border-right: 1px solid #111;
}
.listener .macro {
    width: 98px;
    height: 24px;
    background: #d9c1c1;
    border: 2px solid #888;
    border-right-color: #eee;
    border-bottom-color: #eee;
}
.listener .script {
    width: 98px;
    height: 23px;
    padding: 1px 4px;
    border: 1px solid #888;
    background: #fff;
    color: #111;
}
.sunken {
    display: block;
    height: 21px;
    padding: 0 5px;
    line-height: 21px;
    border: 1px solid #383838;
    border-top: 1px solid #0c0c0c;
    border-left: 1px solid #0c0c0c;
}
.grow {
    flex: 1;
}
.info {
    flex: 1;
    display: flex;
    flex-direction: column;
    gap: 2px;
    margin-left: 2px;
    padding-top: 1px;
}
.info .prompt {
    margin-right: 2px;
}
.info-icons {
    display: flex;
    gap: 11px;
    padding: 0 6px;
}
.info-icons button, .info-icons svg {
    width: 16px;
    height: 18px;
}
.coords {
    display: flex;
    gap: 13px;
    margin-right: 13px;
}
.coords label {
    display: flex;
    align-items: center;
    justify-content: space-between;
    width: 69px;
    font-size: 11px;
}
.coords input {
    width: 58px;
    height: 21px;
    padding: 0 1px;
    color: #1c1c1c;
}
.iso {
    width: 22px;
    height: 22px;
}
.iso svg {
    width: 18px;
    height: 18px;
}
.iso.on, .nav-tools .on {
    background: #3a80dc;
    border: 1px solid #111;
}
.units {
    display: flex;
    flex-direction: column;
    gap: 4px;
    width: 98px;
    margin: 2px 4px 0 2px;
}
.raised {
    border: 1px solid #333;
    border-right-color: #0c0c0c;
    border-bottom-color: #0c0c0c;
}
.key {
    width: 42px;
    height: 45px;
    margin: 1px 3px 0 0;
}
.keys {
    width: 183px;
    margin-right: 11px;
    padding-top: 1px;
}
.mode {
    width: 67px;
    height: 22px;
    margin-right: 3px;
}
.keyset {
    width: 113px;
    height: 20px;
}
.keyset select {
    border: 1px solid #0c0c0c;
    border-width: 2px 1px 1px 2px;
    padding-left: 1px;
}
.tangent {
    width: 24px;
    height: 22px;
    margin-right: 2px;
}
.tangent svg {
    width: 18px;
    height: 18px;
}
.filters {
    flex: 1;
    height: 22px;
}
.playback {
    width: 124px;
}
.playback button {
    width: 22px;
    height: 22px;
}
.playback .last {
    width: 18px;
}
.playback svg {
    width: 18px;
    height: 14px;
}
.playback input {
    width: 63px;
    height: 20px;
    padding-left: 1px;
    margin-left: -2px;
}
.playback .spin {
    margin-left: 1px;
    height: 18px;
}
.playback .time-config, .time-config svg {
    width: 18px;
    height: 18px;
}
.nav-tools {
    display: grid;
    grid-template-columns: repeat(4, 23px);
    grid-template-rows: 23px 22px;
    width: 96px;
}
.nav-tools button {
    height: 22px;
}
.nav-tools svg {
    width: 20px;
    height: 20px;
}

/* Minimized window */
.mini-window {
    position: absolute;
    left: 1px;
    bottom: 0;
    display: flex;
    align-items: center;
    gap: 4px;
    width: 158px;
    height: 26px;
    padding: 0 4px 4px 7px;
    border: 1px solid #223;
    border-bottom: none;
    border-radius: 6px 6px 0 0;
    background: linear-gradient(90deg, #d8e8f4, #e8f2f8 45%, #d0dee8 65%, #7c8c9c 80%, #b0c4d8);
    box-shadow: inset 0 0 0 1px #eef6fc;
    color: #111;
    white-space: nowrap;
}
.mini-buttons {
    display: flex;
    flex: none;
    width: 103px;
    height: 19px;
    margin: -4px 0 0 -1px;
    border: 1px solid #6a7c90;
    border-top: none;
    border-radius: 0 0 5px 5px;
}
.mini-buttons button {
    flex: 28;
    border-right: 1px solid #8a9cb0;
}
.mini-buttons .close {
    flex: 46;
    border: none;
}
```
